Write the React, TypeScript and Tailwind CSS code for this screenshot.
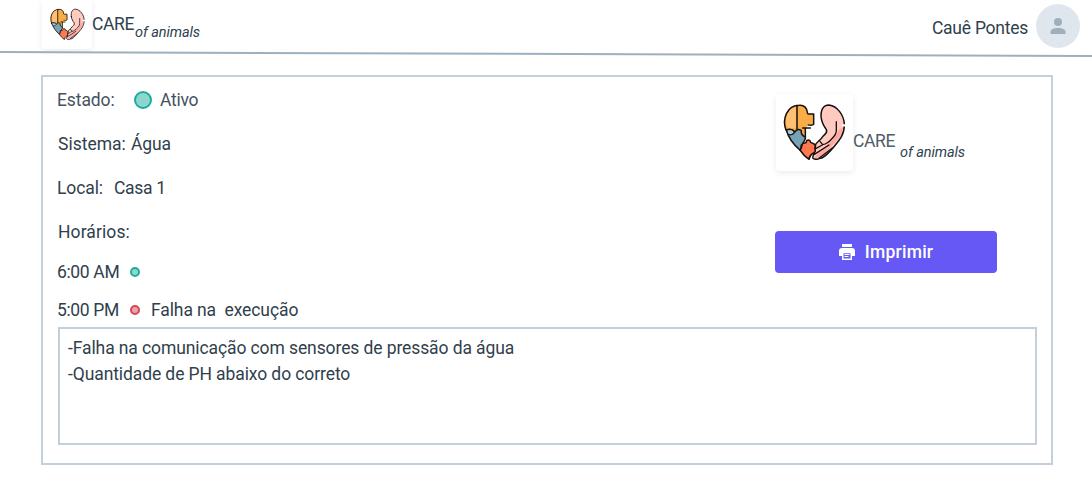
import React from "react";

function HeartLogo({ className }: { className: string }) {
  return (
    <svg viewBox="18 12 231 231" className={className} fill="none" stroke="#16100f" strokeWidth="4.5" strokeLinejoin="round" strokeLinecap="round">
      <path fill="#fbad45" stroke="none" d="M46 120C35 88 50 46 88 46C102 45 112 53 113 71H131V104H116L106 115V151L77 140Z" />
      <path fill="#ffc073" stroke="none" d="M50 107C44 72 57 49 79 49V112L56 116Z" />
      <path d="M48 120C36 88 50 46 88 46C102 45 112 53 113 71C118 74 121 71 131 72V103C126 108 119 105 115 105M81 46V117M98 114H121M106 115V146" />
      <path fill="#78a3b4" d="M49 120C58 116 68 117 75 126C78 117 90 116 94 122C92 134 98 138 106 141C108 151 100 153 98 162C88 166 96 174 91 181C70 164 55 142 49 120Z" />
      <path fill="#a5cbd8" strokeWidth="3.500" d="M50 120C60 116 72 119 73 128C68 136 58 136 53 131Z" />
      <path fill="#ffcbc0" d="M154 86C150 60 160 45 177 45C202 48 222 76 223 103C224 139 202 157 186 177C174 190 160 207 149 205C140 211 124 207 129 199L134 186L137 163C144 153 151 151 158 140C164 132 174 130 169 119C162 109 156 99 154 86Z" />
      <path fill="#ffa8a0" stroke="none" d="M220 111C218 139 195 156 176 177L151 203L133 204L144 188L183 154C198 140 201 119 220 111Z" />
      <path strokeWidth="4" d="M199 95V121C200 138 184 146 177 155M150 154L158 164C168 163 172 158 177 155M137 176L157 165M133 193L177 165M148 204L187 174" />
      <path fill="#ff7850" d="M98 161C101 157 105 162 109 157C108 147 122 148 121 156C127 162 132 158 136 167C133 174 134 178 136 184C130 192 118 192 117 208C108 202 98 193 90 180C96 176 94 167 98 161Z" />
      <path stroke="#fff" strokeWidth="7" d="M219 106H229" />
    </svg>
  );
}

function Printer() {
  return (
    <svg viewBox="0 0 16 16" className="h-4 w-4 shrink-0" fill="#fff">
      <path d="M3 0h10v3H3zM3 4h10a3 3 0 0 1 3 3v5h-3V8H3v4H0V7a3 3 0 0 1 3-3z" />
      <path fillRule="evenodd" d="M3 8h10v8H3zm1.5 1.2v5.3h7V9.2z" />
      <path d="M5.5 10h5v1h-5zM5.5 12h4v1h-4z" />
    </svg>
  );
}

export default function App() {
  return (
    <div className="h-[504px] w-[1092px] overflow-hidden bg-white font-['Roboto',sans-serif] text-[17.5px] leading-6 tracking-[-0.1px] text-[#303f4d]">
      <header className="relative flex h-[54px] items-start">
        <div className="ml-[42px] h-[49px] w-[50px] shrink-0 rounded-b-[3px] bg-white pt-[3px] pl-[4px] shadow-[0_2px_6px_rgba(0,0,0,0.08)]">
          <HeartLogo className="h-[43px] w-[43px]" />
        </div>
        <span className="mt-[12px] w-[43px] whitespace-nowrap tracking-[-0.4px]">CARE</span>
        <span className="mt-[21px] whitespace-nowrap text-[14.5px] italic">of animals</span>
        <span className="mt-[16px] ml-auto whitespace-nowrap tracking-[-0.25px]">Cauê Pontes</span>
        <div className="mt-[4px] mr-[12px] ml-2 flex h-11 w-11 items-center justify-center rounded-full bg-[#dfe6ee]">
          <svg viewBox="0 0 16 16" className="h-4 w-4" fill="#9eafbb">
            <circle cx="8" cy="4" r="4" />
            <path d="M.5 16v-2C.5 11 4 10 8 10s7.500 1 7.500 4v2z" />
          </svg>
        </div>
        <div className="absolute top-[53px] left-[-2px] h-[2px] w-[1096px] rotate-[0.21deg] bg-[#9eb0be]" />
      </header>
      <main className="mt-[21px] ml-[41px] h-[390px] w-[1012px] border-2 border-[#c3cfda] pt-[11px] pr-[14px] pl-[14px]">
        <div className="flex h-[239px] justify-between">
          <section>
            <div className="flex h-11 whitespace-nowrap text-[#45525f]">
              <span className="w-[77px]">Estado:</span>
              <i className="mt-[3px] mr-2 h-[18px] w-[18px] rounded-full border-2 border-[#1cad9d] bg-[#8ed6cd]" />
              <span className="tracking-[-0.25px]">Ativo</span>
            </div>
            <div className="flex h-11 pl-px whitespace-nowrap">
              <span className="w-[73px] tracking-normal">Sistema:</span>
              <span>Água</span>
            </div>
            <div className="flex h-11 whitespace-nowrap">
              <span className="w-[57px]">Local:</span>
              <span className="tracking-[-0.3px]">Casa 1</span>
            </div>
            <div className="h-10 pl-px tracking-[0.1px]">Horários:</div>
            <div className="flex h-[38px] whitespace-nowrap">
              <span className="w-[73px] tracking-[-0.35px]">6:00 AM</span>
              <i className="mt-[7px] h-[10px] w-[10px] rounded-full border-2 border-[#1cad9d] bg-[#8ed6cd]" />
            </div>
            <div className="flex whitespace-nowrap">
              <span className="w-[73px] tracking-[-0.35px]">5:00 PM</span>
              <i className="mt-[7px] mr-[11px] h-[10px] w-[10px] rounded-full border-2 border-[#d64558] bg-[#eba4ae]" />
              <span className="whitespace-pre">Falha na  execução</span>
            </div>
          </section>
          <aside className="w-[262px] pt-[6px]">
            <div className="flex h-[137px]">
              <div className="h-[77px] w-[77px] shrink-0 translate-x-px rounded-[3px] bg-white shadow-[0_2px_6px_rgba(0,0,0,0.08)]">
                <HeartLogo className="h-[77px] w-[77px]" />
              </div>
              <span className="mt-[35px] w-[48px] pl-px whitespace-nowrap tracking-[-0.4px] text-[#505d69]">CARE</span>
              <span className="mt-[47px] whitespace-nowrap text-[14.5px] italic">of animals</span>
            </div>
            <button className="flex h-[42px] w-[222px] items-center justify-center gap-[10px] rounded-[4px] bg-[#6558f5] font-medium tracking-[0.25px] text-white">
              <Printer />
              <span>Imprimir</span>
            </button>
          </aside>
        </div>
        <div className="ml-px h-[118px] w-[979px] border-2 border-[#c3cfda] pt-[6px] pl-[8px] leading-[26px] whitespace-nowrap">
          <p>-Falha na comunicação com sensores de pressão da água</p>
          <p>-Quantidade de PH abaixo do correto</p>
        </div>
      </main>
    </div>
  );
}
